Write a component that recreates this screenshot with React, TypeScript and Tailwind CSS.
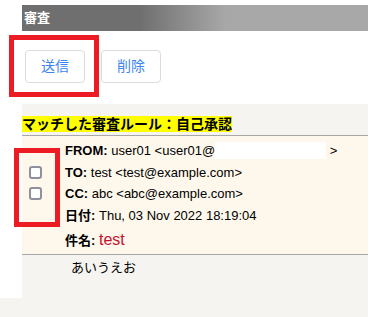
import React from 'react';

const font = 'font-["Liberation_Sans","Noto_Sans_CJK_JP",sans-serif]';

const Check: React.FC = () => (
  <input
    type="checkbox"
    className="m-0 ml-[7px] h-[13px] w-[13px] appearance-none rounded-[3px] border-2 border-[#8f8f9d] bg-white"
  />
);

const App: React.FC = () => {
  return (
    <div className={`${font} relative h-[317px] w-[368px] overflow-hidden bg-[#f5f4f0] text-black`}>
      <div className="flex h-[298px]">
        <div className="w-[22px] shrink-0 bg-white" />
        <div className="flex flex-1 flex-col">
          {/* top: title + buttons */}
          <div className="h-[104px] bg-white pt-[5px]">
            <div className="flex h-[26px] items-center bg-[linear-gradient(90deg,#6f6f6f_34%,#a8a8a8_59%)] pl-[2px] text-[13px] font-bold text-white">
              審査
            </div>
            <div className="ml-[3px] mt-[19px] flex gap-[16px]">
              <button className="h-[33px] w-[60px] rounded-[4px] border border-[#dcdcdc] bg-white text-[14px] text-[#3b86f0]">
                送信
              </button>
              <button className="h-[33px] w-[60px] rounded-[4px] border border-[#dcdcdc] bg-white text-[14px] text-[#3b86f0]">
                削除
              </button>
            </div>
          </div>

          {/* rule + mail header */}
          <div className="flex pt-[12px]">
            <span className="block h-[16px] bg-[#ffff00] text-[14px] font-bold leading-[16px]">
              マッチした審査ルール：自己承認
            </span>
          </div>
          <div className="mt-[3px] border-y border-[#a8a8a8] bg-[#fef8ec] pt-[4px] text-[13px]">
            <div className="flex h-[21.5px] items-center">
              <div className="w-[43px]" />
              <div className="flex items-center whitespace-nowrap">
                <b>FROM:</b>&nbsp;user01 &lt;user01@
                <span className="inline-block h-[17px] w-[111px] bg-white" />
                &nbsp;&gt;
              </div>
            </div>
            <div className="flex h-[21.5px] items-center">
              <div className="flex w-[43px]">
                <Check />
              </div>
              <div>
                <b>TO:</b> test &lt;test@example.com&gt;
              </div>
            </div>
            <div className="flex h-[21.5px] items-center">
              <div className="flex w-[43px]">
                <Check />
              </div>
              <div>
                <b>CC:</b> abc &lt;abc@example.com&gt;
              </div>
            </div>
            <div className="flex h-[21.5px] items-center">
              <div className="w-[43px]" />
              <div>
                <b>日付:</b> Thu, 03 Nov 2022 18:19:04
              </div>
            </div>
            <div className="flex h-[28px] items-center">
              <div className="w-[43px]" />
              <div>
                <b>件名:</b> <span className="text-[16px] text-[#c8102e]">test</span>
              </div>
            </div>
          </div>
          <div className="pl-[49px] pt-[3px] text-[13px] leading-[20px]">あいうえお</div>
        </div>
      </div>

      {/* annotation boxes */}
      <div className="absolute left-[9px] top-[35px] h-[62px] w-[90px] border-[5px] border-[#ed1c24]" />
      <div className="absolute left-[14px] top-[148px] h-[79px] w-[46px] border-[5px] border-[#ed1c24]" />
    </div>
  );
};

export default App;
